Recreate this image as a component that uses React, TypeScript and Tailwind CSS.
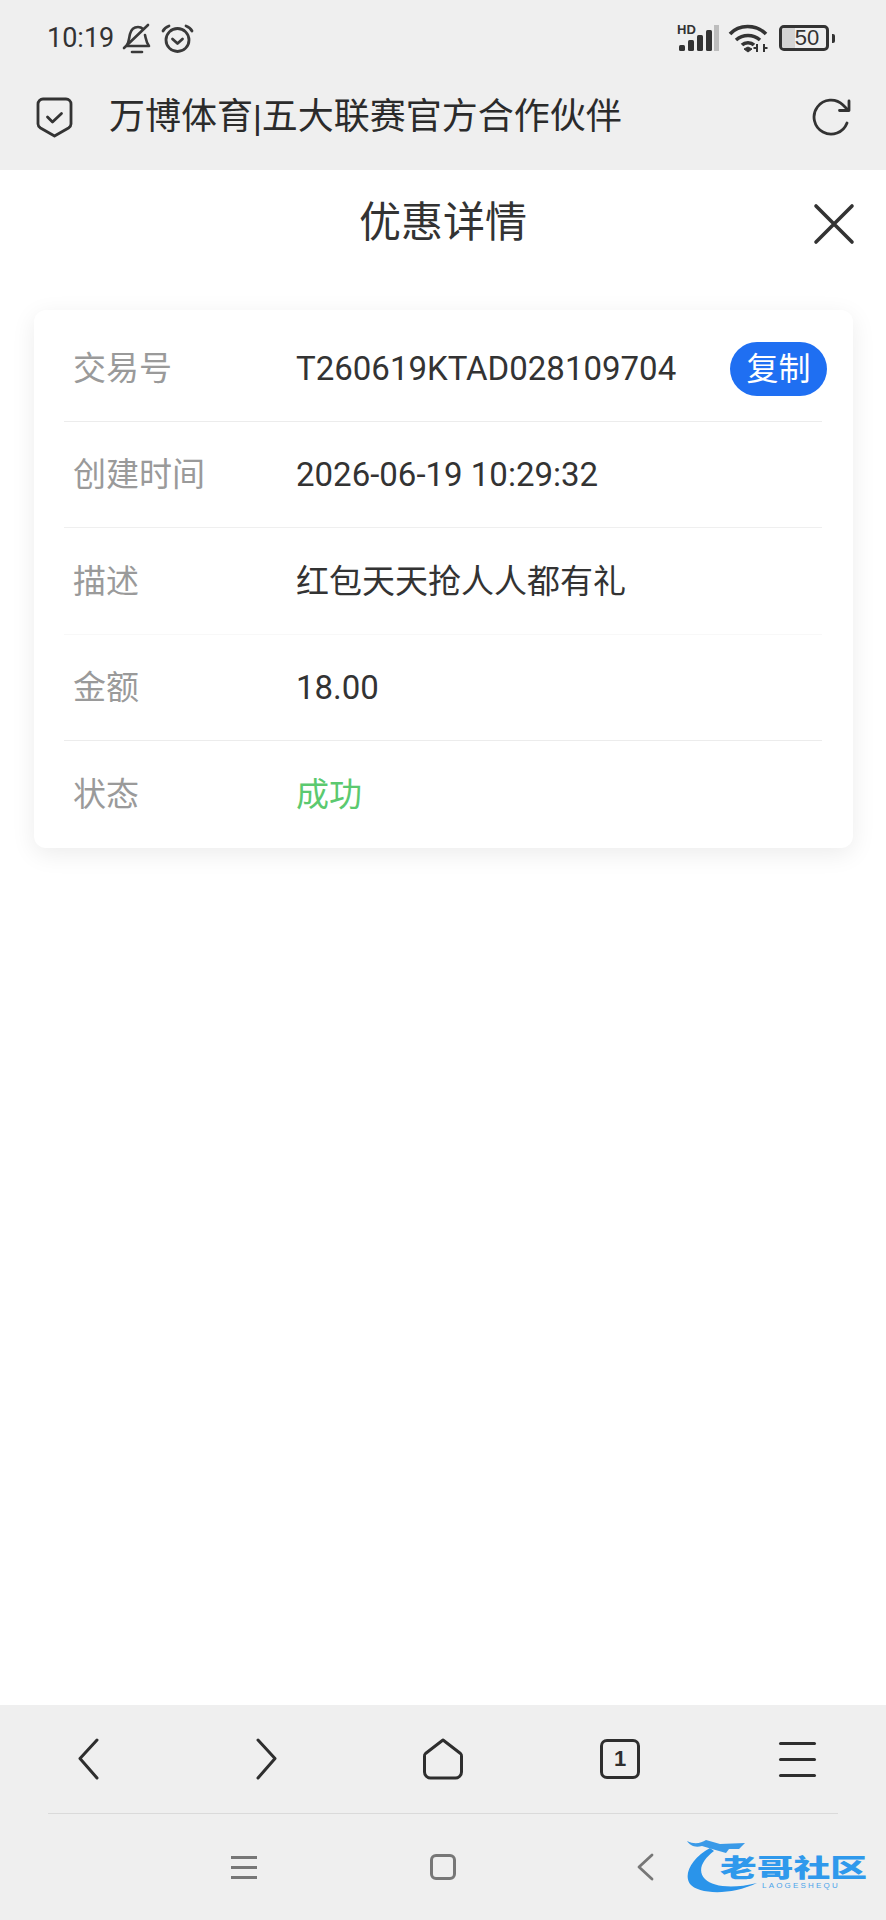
const sans = "font-['Roboto','Noto_Sans_CJK_SC',sans-serif]";

const rows = [
  { label: "交易号", value: "T260619KTAD028109704", copy: true, h: "h-[112px] pt-[6px] border-[#ececec]" },
  { label: "创建时间", value: "2026-06-19 10:29:32", h: "h-[106px] border-[#efefef]" },
  { label: "描述", value: "红包天天抢人人都有礼", h: "h-[107px] border-[#f8f8f8]" },
  { label: "金额", value: "18.00", h: "h-[106px] border-[#ececec]" },
  { label: "状态", value: "成功", green: true, h: "h-[107px] border-transparent" },
];

function StatusBar() {
  return (
    <div className="flex h-[76px] items-center justify-between pl-[47px] pr-[51px]">
      <div className="flex items-center">
        <span className="w-[66px] text-[27px] leading-none text-[#333]">10:19</span>
        <svg className="ml-[9px]" width="30" height="31" viewBox="0 0 30 31" fill="none" stroke="#3a3a3a" strokeWidth="2.6" strokeLinecap="round" strokeLinejoin="round">
          <path d="M5 22c2-3 2-7 3-11 1-4 4-7 8-7 2 0 4 1 5 2" />
          <path d="M23 12c1 4 1 7 4 11H5" />
          <path d="M26 2 2 25" />
          <path d="M10 29h10" />
        </svg>
        <svg className="ml-[9px]" width="33" height="31" viewBox="0 0 33 31" fill="none" stroke="#3a3a3a" strokeWidth="2.8" strokeLinecap="round" strokeLinejoin="round">
          <circle cx="16.5" cy="17" r="11.5" />
          <path d="m11.5 16 5 4.500 5-4.500" />
          <path d="M2 8c1-2 3-4 6-5M31 8c-1-2-3-4-6-5" />
        </svg>
      </div>
      <div className="flex items-center">
        <div className="relative h-[28px] w-[42px]">
          <span className="absolute left-0 top-0 font-['Liberation_Sans',sans-serif] text-[13px] font-bold leading-[12px] text-[#333]">HD</span>
          <svg className="absolute left-0 top-0" width="42" height="28" viewBox="0 0 42 28" fill="#333">
            <rect x="2" y="21" width="6" height="6" rx="1.5" />
            <rect x="11" y="16" width="6" height="11" rx="1.5" />
            <rect x="20" y="11" width="6" height="16" rx="1.5" />
            <rect x="29" y="6" width="6" height="21" rx="1.5" />
            <rect x="37" y="1" width="5" height="26" fill="#bdbdbd" />
          </svg>
        </div>
        <svg className="ml-[9px]" width="40" height="30" viewBox="0 0 40 30" fill="none" stroke="#333" strokeWidth="3.6">
          <path d="M2 11C11 1 28 1 38 11" />
          <path d="M8 17c7-6 17-6 24 0" />
          <path d="M14 22c3-3 9-3 12 0" />
          <path d="m16 26 4-2 4 2-4 3z" fill="#333" strokeWidth="1" />
          <path d="M29 21v8M36 21v8M25.5 25H29M36 25h3.5" strokeWidth="2" />
        </svg>
        <div className="relative ml-[11px] flex h-[26px] w-[50px] items-center justify-center overflow-hidden rounded-[5px] border-[3px] border-[#333] text-[22px] leading-none text-[#333]">
          <div className="absolute inset-y-0 left-0 w-[13px] bg-[#d4d4d4]" />
          <span className="relative pl-[6px] font-['Liberation_Sans',sans-serif]">50</span>
        </div>
        <div className="ml-[3px] h-[9px] w-[3px] rounded-r-[2px] bg-[#333]" />
      </div>
    </div>
  );
}

function UrlBar() {
  return (
    <div className="flex h-[94px] items-center pb-[12px] pl-[36px] pr-[36px]">
      <svg width="37" height="41" viewBox="0 0 37 41" fill="none" stroke="#333" strokeWidth="2.8" strokeLinecap="round" strokeLinejoin="round">
        <path d="M7 2h23a5 5 0 0 1 5 5v20c0 2-1 3-2.500 4L18.500 39 4.500 31C3 30 2 29 2 27V7a5 5 0 0 1 5-5z" />
        <path d="m11.500 20 5 5 9-8.500" />
      </svg>
      <div className="ml-[36px] flex-1 text-[36px] leading-none whitespace-nowrap text-[#2b2b2b]">
        万博体育<span className="font-['Liberation_Sans',sans-serif] text-[34px]">|</span>五大联赛官方合作伙伴
      </div>
      <svg className="ml-[2px] -mr-[2px]" width="40" height="40" viewBox="0 0 40 40" fill="none" stroke="#333" strokeWidth="2.8" strokeLinecap="round" strokeLinejoin="round">
        <path d="M35 26A17 17 0 1 1 31 8l5 5" />
        <path d="M37 4v9.500h-9.500" />
      </svg>
    </div>
  );
}

function Row({ row }: { row: (typeof rows)[number] }) {
  return (
    <div className={`ml-[30px] mr-[31px] flex items-center border-b pl-[9px] ${row.h}`}>
      <span className="w-[223px] shrink-0 text-[33px] leading-none text-[#9a9a9a]">{row.label}</span>
      <span className={`text-[33px] leading-none whitespace-nowrap ${row.green ? "text-[#5bc96f]" : "text-[#333]"}`}>
        {row.value}
      </span>
      {row.copy && (
        <button className="-mr-[5px] ml-auto flex h-[54px] w-[97px] items-center justify-center rounded-[27px] bg-[#1f6ff2] text-[32px] leading-none text-white">
          复制
        </button>
      )}
    </div>
  );
}

function BottomBar() {
  return (
    <div className="relative h-[215px] bg-[#efefef]">
      <div className="grid h-[108px] grid-cols-5 items-center">
        <div className="flex justify-center">
          <svg width="24" height="42" viewBox="0 0 24 42" fill="none" stroke="#2e2e2e" strokeWidth="3" strokeLinecap="round" strokeLinejoin="round">
            <path d="M20 2 3 20.500 20 40" />
          </svg>
        </div>
        <div className="flex justify-center">
          <svg width="24" height="42" viewBox="0 0 24 42" fill="none" stroke="#2e2e2e" strokeWidth="3" strokeLinecap="round" strokeLinejoin="round">
            <path d="m4 2 17 18.500L4 40" />
          </svg>
        </div>
        <div className="flex justify-center">
          <svg width="42" height="42" viewBox="0 0 42 42" fill="none" stroke="#2e2e2e" strokeWidth="3" strokeLinecap="round" strokeLinejoin="round">
            <path d="M21 2 3.500 15.500a3 3 0 0 0-1 2.500v16a6 6 0 0 0 6 6h25a6 6 0 0 0 6-6V18a3 3 0 0 0-1-2.500z" />
          </svg>
        </div>
        <div className="flex justify-center">
          <div className="flex h-[40px] w-[40px] items-center justify-center rounded-[7px] border-[3px] border-[#2e2e2e] font-['Liberation_Sans',sans-serif] text-[22px] font-bold leading-none text-[#2e2e2e]">
            1
          </div>
        </div>
        <div className="flex justify-center">
          <div className="flex w-[37px] flex-col gap-[13px]">
            <div className="h-[3px] rounded-full bg-[#2e2e2e]" />
            <div className="h-[3px] rounded-full bg-[#2e2e2e]" />
            <div className="h-[3px] rounded-full bg-[#2e2e2e]" />
          </div>
        </div>
      </div>
      <div className="mx-[48px] h-px bg-[#dadada]" />
      <div className="flex h-[106px] items-center pl-[231px]">
        <div className="flex w-[26px] flex-col gap-[7px]">
          <div className="h-[3px] bg-[#777]" />
          <div className="h-[3px] bg-[#777]" />
          <div className="h-[3px] bg-[#777]" />
        </div>
        <div className="ml-[173px] h-[26px] w-[26px] rounded-[6px] border-[3px] border-[#777]" />
        <svg className="ml-[180px]" width="20" height="28" viewBox="0 0 20 28" fill="none" stroke="#777" strokeWidth="2.8" strokeLinecap="round" strokeLinejoin="round">
          <path d="M16 2 3 14l13 12" />
        </svg>
      </div>
      <Logo />
    </div>
  );
}

// watermark sitting over the nav bar
function Logo() {
  return (
    <div className="absolute left-[684px] top-[125px] h-[72px] w-[190px]">
      <svg className="absolute left-0 top-0" width="80" height="70" viewBox="0 0 80 70">
        <path d="M26 18C8 28-1 44 6 54c8 10 40 12 67-1-24 6-44 4-52-4C13 41 18 30 30 21z" fill="#2a94ea" />
        <path d="M3 11c8 4 14 2 19-1l14 4 25-1-6 6H45l-3 4-14-4-10-3C10 18 6 15 3 11z" fill="#3a9ae8" />
      </svg>
      <div className="absolute left-[36px] top-[24px] origin-left scale-x-[1.47] font-['Noto_Sans_CJK_SC',sans-serif] text-[25px] font-black leading-none whitespace-nowrap text-[#2f99ec]">
        老哥社区
      </div>
      <div className="absolute left-[78px] top-[52px] font-['Liberation_Sans',sans-serif] text-[8px] leading-none tracking-[2.200px] whitespace-nowrap text-[#4aa3ea]">
        LAOGESHEQU
      </div>
    </div>
  );
}

export default function App() {
  return (
    <div className={`flex h-[1920px] w-[886px] flex-col bg-white ${sans}`}>
      <div className="h-[170px] bg-[#efefef]">
        <StatusBar />
        <UrlBar />
      </div>
      <div className="flex-1">
        <div className="relative flex h-[108px] items-center justify-center pb-[2px]">
          <h1 className="text-[42px] font-normal leading-none text-[#333]">优惠详情</h1>
          <svg className="absolute left-[813px] top-[33px]" width="42" height="42" viewBox="0 0 42 42" fill="none" stroke="#333" strokeWidth="3.6" strokeLinecap="round">
            <path d="M3 3 39 39M39 3 3 39" />
          </svg>
        </div>
        <div className="ml-[34px] mt-[32px] w-[819px] rounded-[12px] bg-white shadow-[0_6px_24px_rgba(0,0,0,0.08)]">
          {rows.map((row) => (
            <Row key={row.label} row={row} />
          ))}
        </div>
      </div>
      <BottomBar />
    </div>
  );
}
